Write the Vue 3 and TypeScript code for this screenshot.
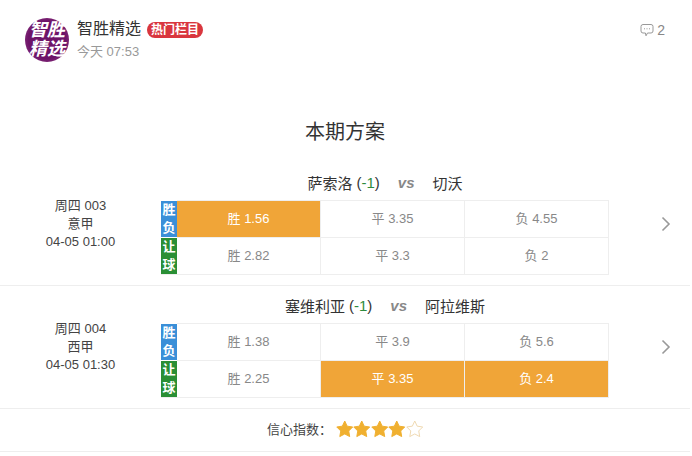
<template>
  <div class="page">
    <header class="head">
      <div class="avatar">
        <span>智胜</span>
        <span>精选</span>
      </div>
      <div class="author">
        <div class="author-top">
          <span class="name">智胜精选</span>
          <span class="badge">热门栏目</span>
        </div>
        <div class="time">今天 07:53</div>
      </div>
      <div class="comments">
        <svg width="14" height="14" viewBox="0 0 14 14" fill="none" stroke="#999" stroke-width="1">
          <path d="M3 1.5h8a2 2 0 0 1 2 2v4.5a2 2 0 0 1-2 2H7.5L6 12.8 5.4 10H3a2 2 0 0 1-2-2V3.500a2 2 0 0 1 2-2z" />
          <path d="M4 5.800h1M6.500 5.800h1M9 5.800h1" />
        </svg>
        <span>2</span>
      </div>
    </header>

    <h2 class="title">本期方案</h2>

    <section v-for="match in matches" :key="match.no" class="match">
      <div class="teams">
        <span>{{ match.home }}</span>
        <span class="handicap">(<em>-1</em>)</span>
        <span class="vs">vs</span>
        <span>{{ match.away }}</span>
      </div>
      <div class="match-body">
        <div class="info">
          <div>{{ match.no }}</div>
          <div>{{ match.league }}</div>
          <div>{{ match.date }}</div>
        </div>
        <div class="odds">
          <div v-for="row in match.rows" :key="row.label" class="odds-row">
            <div class="tag" :class="row.tagClass">
              <span>{{ row.label[0] }}</span>
              <span>{{ row.label[1] }}</span>
            </div>
            <div
              v-for="cell in row.cells"
              :key="cell.text"
              class="cell"
              :class="{ picked: cell.picked }"
            >
              {{ cell.text }}
            </div>
          </div>
        </div>
        <svg class="arrow" width="10" height="16" viewBox="0 0 10 16" fill="none" stroke="#999" stroke-width="1.600">
          <path d="M1.500 1.500 8 8l-6.500 6.500" />
        </svg>
      </div>
    </section>

    <div class="confidence">
      <span class="confidence-label">信心指数：</span>
      <svg
        v-for="n in 5"
        :key="n"
        class="star"
        width="17.5"
        height="18"
        viewBox="0 0 18 18"
      >
        <path
          d="M9 .8l2.500 5.300 5.700.8-4.100 4.100 1 5.800L9 14.100 3.900 16.800l1-5.800L.8 6.900l5.700-.8z"
          :fill="n <= 4 ? '#f0b030' : '#fff'"
          :stroke="n <= 4 ? '#f0b030' : '#eed8b0'"
        />
      </svg>
    </div>
  </div>
</template>

<script setup lang="ts">
interface Cell {
  text: string;
  picked?: boolean;
}

interface OddsRow {
  label: string;
  tagClass: string;
  cells: Cell[];
}

interface Match {
  no: string;
  league: string;
  date: string;
  home: string;
  away: string;
  rows: OddsRow[];
}

const matches: Match[] = [
  {
    no: "周四 003",
    league: "意甲",
    date: "04-05 01:00",
    home: "萨索洛",
    away: "切沃",
    rows: [
      {
        label: "胜负",
        tagClass: "tag-blue",
        cells: [{ text: "胜 1.56", picked: true }, { text: "平 3.35" }, { text: "负 4.55" }],
      },
      {
        label: "让球",
        tagClass: "tag-green",
        cells: [{ text: "胜 2.82" }, { text: "平 3.3" }, { text: "负 2" }],
      },
    ],
  },
  {
    no: "周四 004",
    league: "西甲",
    date: "04-05 01:30",
    home: "塞维利亚",
    away: "阿拉维斯",
    rows: [
      {
        label: "胜负",
        tagClass: "tag-blue",
        cells: [{ text: "胜 1.38" }, { text: "平 3.9" }, { text: "负 5.6" }],
      },
      {
        label: "让球",
        tagClass: "tag-green",
        cells: [
          { text: "胜 2.25" },
          { text: "平 3.35", picked: true },
          { text: "负 2.4", picked: true },
        ],
      },
    ],
  },
];
</script>

<style>
html,
body {
  margin: 0;
  background: #fff;
  overflow: hidden;
}
</style>

<style scoped>
.page {
  width: 690px;
  height: 456px;
  overflow: hidden;
  box-sizing: border-box;
  font-family: "Liberation Sans", "Noto Sans CJK SC", sans-serif;
  color: #333;
}

.head {
  display: flex;
  align-items: flex-start;
  padding: 18px 25px 0 25px;
  height: 66px;
  box-sizing: border-box;
}

.avatar {
  width: 44px;
  height: 44px;
  border-radius: 50%;
  background: radial-gradient(circle, #6d1468 60%, #a04a90 100%);
  color: #fff;
  font-size: 18px;
  font-weight: 700;
  font-style: italic;
  line-height: 19px;
  display: flex;
  flex-direction: column;
  align-items: center;
  justify-content: center;
  flex-shrink: 0;
}

.author {
  margin-left: 8px;
  flex: 1;
}

.author-top {
  display: flex;
  align-items: center;
  height: 22px;
}

.name {
  font-size: 16px;
  line-height: 20px;
  color: #333;
}

.badge {
  margin-left: 6px;
  width: 56px;
  height: 16px;
  line-height: 16px;
  border-radius: 8px;
  background: #d9363e;
  color: #fff;
  font-size: 12px;
  font-weight: 700;
  text-align: center;
  margin-top: 2px;
}

.time {
  margin-top: 2px;
  font-size: 13px;
  line-height: 20px;
  color: #999;
}

.comments {
  display: flex;
  align-items: center;
  gap: 3px;
  height: 24px;
  font-size: 14px;
  color: #888;
}

.title {
  margin: 51px 0 0;
  font-size: 20px;
  font-weight: 400;
  line-height: 30px;
  text-align: center;
  color: #333;
}

.match {
  height: 123px;
  box-sizing: border-box;
  border-bottom: 1px solid #eee;
  padding-top: 9px;
}

.match:first-of-type {
  height: 139px;
  padding-top: 25px;
}

.teams {
  display: flex;
  justify-content: center;
  align-items: center;
  height: 20px;
  padding: 0 81px 0 161px;
  font-size: 15px;
  color: #333;
}

.handicap {
  margin-left: 4px;
}

.handicap em {
  font-style: normal;
  color: #2e8b3d;
}

.vs {
  margin: 0 18px;
  font-weight: 700;
  font-style: italic;
  color: #888;
}

.match-body {
  display: flex;
  align-items: flex-start;
  margin-top: 8px;
}

.info {
  width: 161px;
  margin-top: -3px;
  font-size: 13px;
  line-height: 18px;
  text-align: center;
  color: #444;
}

.odds {
  width: 448px;
  border-bottom: 1px solid #eee;
}

.odds-row {
  display: flex;
  height: 37px;
}

.tag {
  width: 16px;
  flex-shrink: 0;
  margin-top: 1px;
  display: flex;
  flex-direction: column;
  align-items: center;
  justify-content: center;
  font-size: 13px;
  font-weight: 700;
  line-height: 18px;
  color: #fff;
}

.tag-blue {
  background: #3a8fd8;
}

.tag-green {
  background: #2a8f35;
}

.cell {
  flex: 1;
  display: flex;
  align-items: center;
  justify-content: center;
  padding-bottom: 3px;
  font-size: 13px;
  color: #888;
  border-top: 1px solid #eee;
  border-right: 1px solid #eee;
  box-sizing: border-box;
}

.cell.picked {
  background: #f0a538;
  background-clip: padding-box;
  color: #fff;
}

.arrow {
  margin-left: 52px;
  margin-top: 16px;
}

.confidence {
  display: flex;
  align-items: center;
  justify-content: center;
  height: 43px;
  padding-bottom: 3px;
  border-bottom: 1px solid #eee;
  box-sizing: border-box;
}

.confidence-label {
  font-size: 13px;
  color: #444;
  margin-right: 3.5px;
}

.star {
  display: block;
}
</style>
